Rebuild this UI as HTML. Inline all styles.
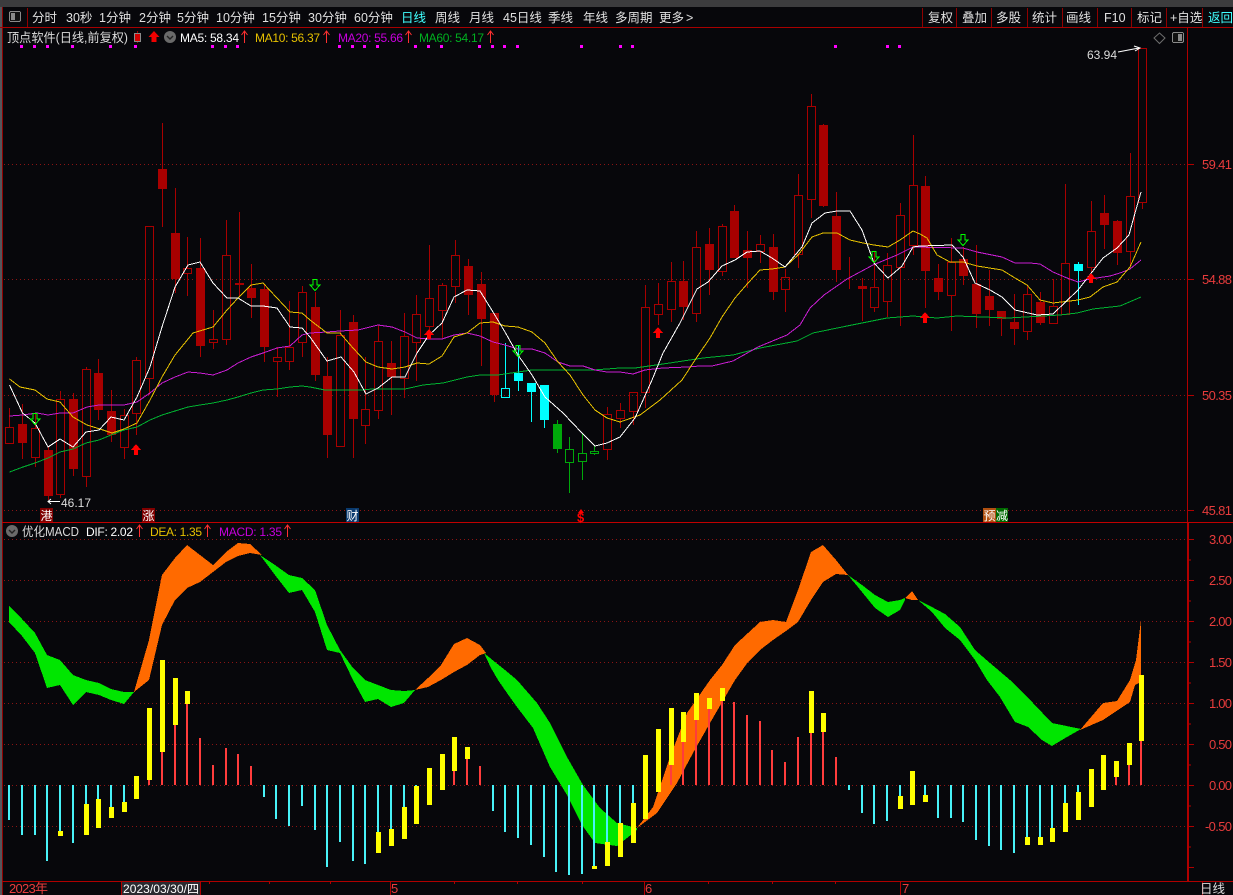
<!DOCTYPE html>
<html><head><meta charset="utf-8"><title>顶点软件</title>
<style>
html,body{margin:0;padding:0;background:#07070b;width:1233px;height:895px;overflow:hidden}
svg{display:block}
text{font-family:"Liberation Sans","WenQuanYi Zen Hei","Noto Sans CJK SC",sans-serif;font-size:12px;fill:#dcdcdc}
.ax{fill:#e83c3c;font-size:13px}
.tb{font-size:12.5px;fill:#e0e0e0}
</style></head><body>
<svg width="1233" height="895" viewBox="0 0 1233 895" xmlns="http://www.w3.org/2000/svg">
<rect width="1233" height="895" fill="#07070b"/>
<rect width="1233" height="7" fill="#3c3c3e"/>
<rect x="0" y="7" width="2" height="888" fill="#55555a"/>
<g shape-rendering="crispEdges">
<path d="M2.5 7V895M27.5 8V27M922.5 8V27M956.5 8V27M991.5 8V27M1027.5 8V27M1062.5 8V27M1097.5 8V27M1131.5 8V27M1166.5 8V27M1202.5 8V27" stroke="#900000" fill="none"/>
<path d="M0 27.5H1233" stroke="#a80000" fill="none"/>
<path d="M1187.5 27V522" stroke="#b00000" fill="none"/>
<path d="M1188 522V881" stroke="#b00000" stroke-width="2" fill="none"/>
<path d="M2 522.5H1233" stroke="#c00000" stroke-width="1.4" fill="none"/>
<path d="M2 881.5H1233" stroke="#b00000" fill="none"/>
<path d="M1202.5 881V895M121.5 881V895M200.5 881V895M390.5 881V895M644.5 881V895M900.5 881V895" stroke="#b00000" fill="none"/>
<path d="M209.5 881V884M269.5 881V884M330.5 881V884M454.5 881V884M517.5 881V884M582.5 881V884M708.5 881V884M772.5 881V884M835.5 881V884" stroke="#b00000" fill="none"/>
<path d="M4 164.5H1188M4 279.5H1188M4 395.5H1188M4 510.5H1188M4 539.5H1188M4 580.5H1188M4 621.5H1188M4 662.5H1188M4 703.5H1188M4 744.5H1188M4 785.5H1188M4 826.5H1188" stroke="#8a1414" stroke-dasharray="1 3" fill="none"/>
<path d="M1188 164.5h6M1188 279.5h6M1188 395.5h6M1188 510.5h6M1188 539.5h6M1188 580.5h6M1188 621.5h6M1188 662.5h6M1188 703.5h6M1188 744.5h6M1188 785.5h6M1188 826.5h6M1188 867.5h6M1188 560h3M1188 601h3M1188 642h3M1188 683h3M1188 724h3M1188 765h3M1188 806h3M1188 847h3" stroke="#b00000" fill="none"/>

<!-- candle wicks -->
<path fill="none" stroke="#a80000" d="M9.5 408V427M22.5 404V459M35.5 413V428M35.5 457V467M48.5 447V500M60.5 391V399M60.5 494V498M73.5 393V476M86.5 367V369M86.5 476V487M98.5 359V420M111.5 390V442M124.5 409V415M124.5 447V459M136.5 357V360M136.5 413V435M149.5 378V395M162.5 123V227M175.5 188V293M187.5 237V268M187.5 273V296M200.5 238V357M213.5 310V339M213.5 342V349M226.5 220V255M226.5 339V345M239.5 212V297M251.5 264V318M264.5 285V362M277.5 347V357M277.5 361V397M289.5 301V347M289.5 361V370M302.5 286V292M302.5 342V357M315.5 292V381M327.5 357V458M340.5 310V335M353.5 315V458M365.5 357V409M365.5 425V444M378.5 325V341M378.5 410V419M391.5 341V415M404.5 313V336M404.5 378V398M416.5 295V314M416.5 342V381M429.5 245V298M429.5 326V335M442.5 283V285M442.5 310V338M455.5 240V255M455.5 286V303M468.5 259V315M481.5 272V366M494.5 313V402M607.5 407V414M607.5 449V460M620.5 403V410M620.5 418V428M633.5 411V425M645.5 285V307M645.5 392V408M658.5 283V304M658.5 314V325M671.5 262V281M671.5 309V322M683.5 261V320M696.5 231V247M696.5 313V322M709.5 228V295M722.5 224V226M722.5 271V276M734.5 205V258M747.5 231V288M760.5 235V244M760.5 251V263M773.5 234V300M785.5 269V277M785.5 289V312M798.5 174V195M798.5 254V268M811.5 94V106M811.5 199V218M823.5 124V207M836.5 192V282M849.5 257V289M862.5 278V321M874.5 252V287M874.5 307V312M887.5 253V265M887.5 301V317M900.5 203V215M900.5 267V326M913.5 135V185M913.5 245V255M925.5 176V308M938.5 264V300M951.5 238V262M951.5 295V331M963.5 247V285M976.5 245V328M989.5 270V326M1001.5 311V336M1014.5 294V345M1027.5 285V294M1027.5 331V340M1040.5 292V325M1053.5 279V306M1065.5 184V263M1091.5 201V231M1091.5 267V272M1104.5 195V249M1117.5 220V265M1130.5 153V196M1130.5 251V265M1142.5 202V209"/>
<!-- filled red bodies -->
<path fill="#a80000" d="M18 424h9V443h-9zM44 450h9V496h-9zM69 399h9V469h-9zM94 373h9V410h-9zM107 411h9V435h-9zM158 169h9V189h-9zM171 233h9V279h-9zM196 268h9V346h-9zM235 283h9V285h-9zM247 288h9V298h-9zM260 289h9V347h-9zM311 307h9V375h-9zM323 376h9V435h-9zM349 322h9V419h-9zM387 363h9V377h-9zM464 266h9V295h-9zM477 284h9V319h-9zM490 313h9V395h-9zM679 281h9V307h-9zM705 244h9V270h-9zM730 211h9V258h-9zM743 250h9V258h-9zM769 247h9V292h-9zM819 125h9V206h-9zM832 216h9V270h-9zM858 286h9V289h-9zM921 186h9V271h-9zM934 278h9V292h-9zM959 259h9V276h-9zM972 284h9V314h-9zM985 296h9V310h-9zM997 311h9V319h-9zM1010 322h9V329h-9zM1036 302h9V323h-9zM1100 213h9V225h-9zM1113 221h9V253h-9z"/>
<!-- hollow red bodies -->
<path fill="none" stroke="#a80000" d="M5.5 427.5h8V443.5h-8zM31.5 428.5h8V457.5h-8zM56.5 399.5h8V494.5h-8zM82.5 369.5h8V476.5h-8zM120.5 415.5h8V447.5h-8zM132.5 360.5h8V413.5h-8zM145.5 226.5h8V378.5h-8zM183.5 268.5h8V273.5h-8zM209.5 339.5h8V342.5h-8zM222.5 255.5h8V339.5h-8zM273.5 357.5h8V361.5h-8zM285.5 347.5h8V361.5h-8zM298.5 292.5h8V342.5h-8zM336.5 335.5h8V446.5h-8zM361.5 409.5h8V425.5h-8zM374.5 341.5h8V410.5h-8zM400.5 336.5h8V378.5h-8zM412.5 314.5h8V342.5h-8zM425.5 298.5h8V326.5h-8zM438.5 285.5h8V310.5h-8zM451.5 255.5h8V286.5h-8zM603.5 414.5h8V449.5h-8zM616.5 410.5h8V418.5h-8zM629.5 392.5h8V411.5h-8zM641.5 307.5h8V392.5h-8zM654.5 304.5h8V314.5h-8zM667.5 281.5h8V309.5h-8zM692.5 247.5h8V313.5h-8zM718.5 226.5h8V271.5h-8zM756.5 244.5h8V251.5h-8zM781.5 277.5h8V289.5h-8zM794.5 195.5h8V254.5h-8zM807.5 106.5h8V199.5h-8zM870.5 287.5h8V307.5h-8zM883.5 265.5h8V301.5h-8zM896.5 215.5h8V267.5h-8zM909.5 185.5h8V245.5h-8zM947.5 262.5h8V295.5h-8zM1023.5 294.5h8V331.5h-8zM1049.5 306.5h8V323.5h-8zM1061.5 263.5h8V314.5h-8zM1087.5 231.5h8V267.5h-8zM1126.5 196.5h8V251.5h-8zM1138.5 48.5h8V202.5h-8z"/>
<!-- cyan candles -->
<path fill="none" stroke="#00ffff" d="M505.5 343V388M505.5 397V398M518.5 345V391M531.5 383V422M544.5 385V428M1078.5 262V305M501.5 388.5h8V397.5h-8z"/>
<path fill="#00ffff" d="M514 373h9V381h-9zM527 383h9V392h-9zM540 385h9V420h-9zM1074 264h9V271h-9z"/>
<!-- green candles -->
<path fill="none" stroke="#00a80a" d="M557.5 420V453M569.5 437V449M569.5 462V493M582.5 433V453M582.5 461V480M594.5 445V451M594.5 453V455M565.5 449.5h8V462.5h-8zM578.5 453.5h8V461.5h-8zM590.5 451.5h8V453.5h-8z"/>
<path fill="#00a80a" d="M553 424h9V449h-9z"/>
<!-- magenta markers -->
<path fill="#ff00ff" d="M20 45h3v3h-3zM33 45h3v3h-3zM46 45h3v3h-3zM71 45h3v3h-3zM109 45h3v3h-3zM134 45h3v3h-3zM211 45h3v3h-3zM224 45h3v3h-3zM236 45h3v3h-3zM338 45h3v3h-3zM351 45h3v3h-3zM363 45h3v3h-3zM376 45h3v3h-3zM414 45h3v3h-3zM427 45h3v3h-3zM440 45h3v3h-3zM478 45h3v3h-3zM491 45h3v3h-3zM503 45h3v3h-3zM516 45h3v3h-3zM580 45h3v3h-3zM619 45h3v3h-3zM631 45h3v3h-3zM834 45h3v3h-3zM886 45h3v3h-3zM898 45h3v3h-3z"/>

<!-- MA lines -->
<polyline fill="none" stroke="#00b030" points="9.5,472 23,467 35,463 48,458 60,452 73,449 86,443 99,440 111,435 124,430 137,427 150,420 162,415 175,411 188,407 200,405 213,403 227,400 238,397 251,393 263,390 277,389 290,387 302,386 310,387 325,390 360,390 373,389 405,389 423,385 443,383 467,377 480,375 498,375 518,372 532,370 593,370 620,368 635,368 663,364 703,358 733,355 760,348 797,341 813,333 847,326 887,318 913,316 937,318 957,316 983,317 1008,318 1060,315 1077,313 1093,309 1120,306 1141,297"/>
<polyline fill="none" stroke="#c81ed2" points="9.5,416 23,415 37,413 48,415 60,413 73,413 87,407 99,405 124,405 137,402 150,393 162,383 175,377 188,372 200,373 213,375 227,370 238,363 251,357 263,353 277,348 290,346 302,335 310,333 327,332 340,331 358,330 378,325 392,327 405,332 417,338 429,339 442,339 454,335 467,333 480,336 493,342 505,345 518,349 532,349 545,353 558,362 570,366 583,366 595,370 607,372 620,372 633,374 645,370 663,368 687,367 700,366 712,366 733,361 758,347 787,335 800,325 810,308 824,295 847,279 873,265 897,255 913,247 963,248 977,252 1002,257 1015,263 1030,263 1040,264 1053,272 1067,278 1078,282 1090,279 1110,276 1120,273 1130,269 1141,260"/>
<polyline fill="none" stroke="#e6c000" points="9.5,379 20,387 35,390 47,399 60,402 73,417 87,425 100,429 112,433 124,429 137,423 150,400 162,377 175,355 193,333 213,327 227,310 238,298 251,285 263,283 277,298 290,312 302,313 310,320 327,333 340,333 353,348 366,362 378,367 392,369 405,367 417,363 429,364 442,356 454,337 467,333 480,323 493,322 505,326 518,327 532,332 545,343 558,362 570,375 583,395 595,410 607,418 620,422 640,415 660,400 682,380 697,357 710,338 722,317 735,298 748,283 760,270 772,269 785,267 798,255 812,237 823,233 837,233 850,240 863,243 874,245 888,247 900,240 913,231 920,234 927,238 937,255 950,262 963,262 977,266 1002,270 1015,278 1027,285 1040,300 1053,303 1078,300 1090,297 1103,287 1117,282 1130,267 1141,242"/>
<polyline fill="none" stroke="#ffffff" points="9.5,385 22.5,413 35,423 48,447 60,439 73,447 86,432 99,430 111,417 124,420 137,397 150,367 162,327 175,287 188,265 200,262 213,283 227,298 238,298 251,306 263,306 277,308 290,327 302,328 310,337 327,361 341,357 354,372 366,394 378,388 392,377 405,377 417,353 429,335 442,323 454,297 467,290 480,291 493,312 505,332 518,355 532,375 545,397 563,413 582,433 595,446 607,443 620,437 635,418 652,380 663,353 680,323 697,289 708,282 722,266 735,260 747,252 760,251 772,258 785,267 802,247 812,223 825,213 837,211 850,211 862,230 874,263 888,278 902,266 913,247 920,246 952,245 963,257 975,283 990,290 1002,297 1015,310 1037,315 1053,314 1078,290 1103,258 1117,248 1129,235 1135,213 1141,192"/>

<!-- signal arrows -->
<path fill="#ff0000" d="M136 444L141 450H138V455H134V450H131ZM658 327L663 333H660V338H656V333H653ZM925 312L930 318H927V323H923V318H920ZM429 329L434 335H431V339H427V335H424ZM1091 273L1096 279H1093V283H1089V279H1086Z"/>
<path fill="none" stroke="#00ff00" d="M33 413.5h4V419h3l-5 5.5l-5-5.5h3zM313 279.5h4V285h3l-5 5.5l-5-5.5h3zM516 345.5h4V351h3l-5 5.5l-5-5.5h3zM872 251.5h4V257h3l-5 5.5l-5-5.5h3zM961 234.5h4V240h3l-5 5.5l-5-5.5h3z"/>

<!-- MACD bands -->
<polygon fill="#00e600" points="9,606 22,619 35,633 47,655 60,660 73,675 86,680 99,683 111,689 124,692 134,692 124,704 111,700 99,695 86,692 73,705 60,685 47,688 35,653 22,636 9,622"/>
<polygon fill="#ff6a00" points="134,692 149,640 162,575 175,558 187,545 200,555 213,565 226,552 238,543 250,544 262,555 250,553 238,556 226,562 213,572 200,582 187,588 175,600 162,625 149,680"/>
<polygon fill="#00e600" points="260,555 275,565 289,575 302,578 315,590 327,625 340,650 353,668 365,680 378,685 391,690 404,691 415,690 404,703 391,707 378,699 365,702 353,680 340,653 327,650 315,612 302,590 289,593 275,575"/>
<polygon fill="#ff6a00" points="415,690 428,678 441,665 454,644 467,638 480,645 486,653 480,655 467,665 454,672 441,680 428,687"/>
<polygon fill="#00e600" points="484,653 495,662 505,670 517,680 537,703 550,723 567,757 583,785 600,808 617,823 637,828 637,830 617,846 595,843 582,825 567,795 550,767 533,728 517,707 507,693 498,680 491,668"/>
<polygon fill="#ff6a00" points="637,828 653,807 670,757 687,713 710,680 722,665 735,645 748,633 760,622 773,620 786,622 798,590 811,552 823,545 836,560 848,575 836,574 823,582 811,600 798,622 786,631 773,640 760,650 748,662 735,680 710,723 693,753 677,783 657,813"/>
<polygon fill="#00e600" points="848,575 862,585 875,595 888,602 900,600 905,598 905,600 900,610 888,617 875,608 862,592"/>
<polygon fill="#ff6a00" points="905,598 912,591 918,600 912,600"/>
<polygon fill="#00e600" points="918,600 930,606 945,614 960,627 975,650 990,663 1010,680 1033,703 1052,723 1081,729 1067,737 1052,746 1042,740 1028,727 1015,722 1000,697 987,680 975,660 960,640 945,628 932,612"/>
<polygon fill="#ff6a00" points="1080,730 1103,703 1117,701 1130,680 1136,660 1141,620 1141,682 1135,685 1130,702 1103,720"/>

<!-- MACD histogram -->
<path fill="none" stroke="#48f2f8" stroke-width="2" d="M9 785V820M22 785V835M35 785V835M47 785V861M60 785V832M73 785V843M86 785V835M98 785V825M111 785V815M124 785V810M264 785V797M276 785V819M289 785V826M302 785V806M315 785V830M327 785V867M340 785V842M353 785V861M365 785V864M378 785V850M391 785V845M404 785V835M416 785V787M493 785V811M505 785V832M518 785V838M531 785V845M544 785V857M556 785V872M569 785V875M582 785V874M594 785V866M607 785V860M620 785V855M633 785V840M849 785V790M862 785V813M874 785V824M887 785V821M900 785V805M925 785V800M938 785V818M951 785V818M963 785V822M976 785V840M989 785V846M1001 785V850M1014 785V853M1027 785V840M1040 785V840M1052 785V835M1065 785V825M1078 785V815"/>
<path fill="none" stroke="#ff3c3c" stroke-width="2" d="M149 785V780M162 785V752M175 785V725M187 785V704M200 785V738M213 785V765M226 785V748M238 785V754M251 785V766M454 785V771M467 785V759M480 785V766M671 785V765M683 785V742M696 785V720M709 785V709M722 785V701M734 785V702M747 785V715M760 785V721M772 785V750M785 785V762M798 785V737M811 785V733M823 785V732M836 785V757M1116 785V777M1129 785V765M1141 785V741"/>
<path fill="none" stroke="#ffff00" stroke-width="5" d="M60.5 831V836M86.5 804V835M98.5 799V828M111.5 807V818M124.5 802V812M136.5 776V799M149.5 708V780M162.5 660V752M175.5 678V725M187.5 691V704M378.5 832V853M391.5 829V846M404.5 807V839M416.5 786V824M429.5 768V805M442.5 754V790M454.5 737V771M467.5 747V759M594.5 866V869M607.5 842V866M620.5 823V857M633.5 803V843M645.5 755V819M658.5 729V792M671.5 708V765M683.5 712V742M696.5 693V720M709.5 698V709M722.5 688V701M811.5 691V733M823.5 713V732M900.5 796V809M912.5 771V805M925.5 795V802M1027.5 837V845M1040.5 837V845M1052.5 828V842M1065.5 803V832M1078.5 792V820M1091.5 769V807M1103.5 755V790M1116.5 761V777M1129.5 743V765M1141.5 675V741"/>

<!-- tag backgrounds -->
<rect x="40" y="508" width="13" height="14" fill="#800000"/>
<rect x="142" y="508" width="13" height="14" fill="#800000"/>
<rect x="346" y="508" width="13" height="14" fill="#0a3a6e"/>
<rect x="983" y="508" width="13" height="14" fill="#b05010"/>
<rect x="996" y="508" width="12" height="14" fill="#006a00"/>
<rect x="122" y="882" width="78" height="13" fill="#2a2a30"/>

<!-- small icons -->
<rect x="9.5" y="11.5" width="11" height="10" rx="1.5" fill="#111" stroke="#8a8a8a"/>
<rect x="11" y="13" width="4" height="7" fill="#8a8a8a"/>
<rect x="1172.5" y="32.5" width="11" height="10" rx="1.5" fill="#111" stroke="#8a8a8a"/>
<rect x="1178" y="34" width="4" height="7" fill="#8a8a8a"/>
</g>
<path d="M1159.5 33L1165 38L1159.5 43.5L1154 38Z" fill="none" stroke="#6e6e6e"/>

<!-- legend icons -->
<path d="M137.5 31V43" stroke="#a00000"/>
<rect x="134.5" y="33.5" width="6" height="8" fill="#d00000" stroke="#8a8a8a"/>
<path d="M154 31L159.500 37H156.500V42H151.500V37H148.500Z" fill="#f00000"/>
<circle cx="170" cy="37" r="6" fill="#6a6a6a"/>
<path d="M167 36l3 3l3-3" fill="none" stroke="#222" stroke-width="1.400"/>
<circle cx="12" cy="531" r="6" fill="#6a6a6a"/>
<path d="M9 530l3 3l3-3" fill="none" stroke="#222" stroke-width="1.400"/>
<path fill="none" stroke="#ff3030" d="M244.500 31V43M241.500 35L244.500 31L247.500 35M326.500 31V43M323.500 35L326.500 31L329.500 35M408.500 31V43M405.500 35L408.500 31L411.500 35M490.500 31V43M487.500 35L490.500 31L493.500 35M139.500 525V537M136.500 529L139.500 525L142.500 529M207.500 525V537M204.500 529L207.500 525L210.500 529M287.500 525V537M284.500 529L287.500 525L290.500 529"/>
<path fill="none" stroke="#ffffff" d="M48 501.500H60M51 499L48 501.500L51 504M1118 52L1139 48M1134 46L1140 48L1135 51"/>
<path fill="#ff0000" d="M581 509L584 513H578Z"/>

<!-- toolbar -->
<text class="tb" x="32" y="22">分时</text>
<text class="tb" x="66" y="22">30秒</text>
<text class="tb" x="99" y="22">1分钟</text>
<text class="tb" x="139" y="22">2分钟</text>
<text class="tb" x="177" y="22">5分钟</text>
<text class="tb" x="216" y="22">10分钟</text>
<text class="tb" x="262" y="22">15分钟</text>
<text class="tb" x="308" y="22">30分钟</text>
<text class="tb" x="354" y="22">60分钟</text>
<text class="tb" x="401" y="22" style="fill:#40ffff">日线</text>
<text class="tb" x="435" y="22">周线</text>
<text class="tb" x="469" y="22">月线</text>
<text class="tb" x="503" y="22">45日线</text>
<text class="tb" x="548" y="22">季线</text>
<text class="tb" x="583" y="22">年线</text>
<text class="tb" x="615" y="22">多周期</text>
<text class="tb" x="659" y="22">更多</text>
<text class="tb" x="686" y="22">&gt;</text>
<text class="tb" x="928" y="22">复权</text>
<text class="tb" x="962" y="22">叠加</text>
<text class="tb" x="996" y="22">多股</text>
<text class="tb" x="1032" y="22">统计</text>
<text class="tb" x="1066" y="22">画线</text>
<text class="tb" x="1104" y="22">F10</text>
<text class="tb" x="1137" y="22">标记</text>
<text class="tb" x="1170" y="22">+自选</text>
<text class="tb" x="1208" y="22" style="fill:#40ffff">返回</text>

<!-- legend -->
<text x="7" y="42" style="font-size:12.500px" textLength="121" lengthAdjust="spacingAndGlyphs">顶点软件(日线,前复权)</text>
<text x="180" y="42" textLength="59" style="fill:#ffffff">MA5: 58.34</text>
<text x="255" y="42" textLength="65" style="fill:#e6c000">MA10: 56.37</text>
<text x="338" y="42" textLength="65" style="fill:#c800dc">MA20: 55.66</text>
<text x="419" y="42" textLength="65" style="fill:#00b020">MA60: 54.17</text>
<text x="22" y="536" textLength="57" lengthAdjust="spacingAndGlyphs" style="font-size:12.500px">优化MACD</text>
<text x="86" y="536" textLength="47" style="fill:#ffffff">DIF: 2.02</text>
<text x="150" y="536" textLength="52" style="fill:#e6c000">DEA: 1.35</text>
<text x="219" y="536" textLength="63" style="fill:#c800dc">MACD: 1.35</text>

<!-- annotations -->
<text x="61" y="507" textLength="30">46.17</text>
<text x="1087" y="59" textLength="30">63.94</text>
<text x="40.500" y="520" style="fill:#fff;font-size:12px">港</text>
<text x="142.500" y="520" style="fill:#fff;font-size:12px">涨</text>
<text x="346.500" y="520" style="fill:#fff;font-size:12px">财</text>
<text x="577" y="522" style="fill:#ff0000;font-size:13px;font-weight:bold">$</text>
<text x="983.500" y="520" style="fill:#fff;font-size:12px">预</text>
<text x="996" y="520" style="fill:#fff;font-size:12px">减</text>

<!-- axis labels -->
<text class="ax" x="1202" y="169" textLength="30">59.41</text>
<text class="ax" x="1202" y="284" textLength="30">54.88</text>
<text class="ax" x="1202" y="400" textLength="30">50.35</text>
<text class="ax" x="1202" y="515" textLength="30">45.81</text>
<text class="ax" x="1209" y="544" textLength="23">3.00</text>
<text class="ax" x="1209" y="585" textLength="23">2.50</text>
<text class="ax" x="1209" y="626" textLength="23">2.00</text>
<text class="ax" x="1209" y="667" textLength="23">1.50</text>
<text class="ax" x="1209" y="708" textLength="23">1.00</text>
<text class="ax" x="1209" y="749" textLength="23">0.50</text>
<text class="ax" x="1209" y="790" textLength="23">0.00</text>
<text class="ax" x="1205" y="831" textLength="27">-0.50</text>

<!-- time axis -->
<text x="9" y="893" textLength="39" style="fill:#e83c3c;font-size:13px">2023年</text>
<text x="123" y="893" textLength="76" style="fill:#ffffff">2023/03/30/四</text>
<text x="391" y="893" style="fill:#e83c3c;font-size:13px">5</text>
<text x="645" y="893" style="fill:#e83c3c;font-size:13px">6</text>
<text x="902" y="893" style="fill:#e83c3c;font-size:13px">7</text>
<text x="1200" y="893" style="font-size:12.500px">日线</text>
</svg>
</body></html>
